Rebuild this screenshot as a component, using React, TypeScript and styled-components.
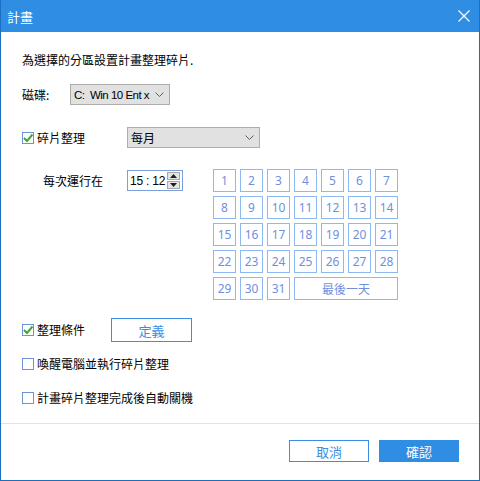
import styled, { createGlobalStyle } from "styled-components";

const GlobalStyle = createGlobalStyle`
  html, body {
    margin: 0;
    padding: 0;
    background: #ffffff;
  }
  body {
    font-family: "Noto Sans", "Noto Sans CJK TC", sans-serif;
    font-size: 12px;
    color: #000;
  }
  * {
    box-sizing: border-box;
  }
`;

const Window = styled.div`
  width: 480px;
  height: 481px;
  display: flex;
  flex-direction: column;
  border: 1px solid #1a6fc0;
  border-top: none;
  background: #fff;
`;

const TitleBar = styled.div`
  height: 32px;
  flex: none;
  background: #2f8de4;
  display: flex;
  align-items: center;
  justify-content: space-between;
  padding: 0 8px 0 6px;
  color: #fff;
  font-family: "Noto Sans CJK TC", sans-serif;
  font-size: 13px;
`;

const CloseButton = styled.div`
  width: 14px;
  height: 14px;
  display: flex;
  align-items: center;
  justify-content: center;
  margin-top: -1px;
`;

const Body = styled.div`
  flex: 1;
  padding-left: 21px;
  display: flex;
  flex-direction: column;
  font-family: "Noto Sans CJK TC", sans-serif;
`;

const Intro = styled.div`
  margin-top: 20px;
  line-height: 16px;
`;

const Row = styled.div<{ $top: number; $height?: number }>`
  display: flex;
  align-items: center;
  margin-top: ${(p) => p.$top}px;
  height: ${(p) => p.$height ?? 21}px;
`;

const Label = styled.div<{ $width?: number }>`
  width: ${(p) => (p.$width ? `${p.$width}px` : "auto")};
  flex: none;
  display: flex;
  align-items: center;
  line-height: 16px;
`;

const Box = styled.span`
  width: 12px;
  height: 12px;
  border: 1px solid #6f92d6;
  background: #fff;
  display: inline-flex;
  align-items: center;
  justify-content: center;
  margin-right: 3px;
  flex: none;
`;

const Select = styled.div<{ $width: number }>`
  width: ${(p) => p.$width}px;
  height: 21px;
  background: #e1e1e1;
  border: 1px solid #adadad;
  display: flex;
  align-items: center;
  justify-content: space-between;
  gap: 3px;
  padding: 0 5px 0 3px;
  overflow: hidden;
  white-space: nowrap;
`;

const SelectText = styled.span<{ $latin?: boolean }>`
  font-family: ${(p) =>
    p.$latin ? `"Liberation Sans", "Noto Sans CJK TC", sans-serif` : `"Noto Sans CJK TC", sans-serif`};
  font-size: ${(p) => (p.$latin ? "11.5px" : "12px")};
  min-width: 0;
  white-space: pre;
  letter-spacing: ${(p) => (p.$latin ? "-0.5px" : "0")};
`;

const Schedule = styled.div`
  display: flex;
  align-items: flex-start;
  margin-top: 21px;
  padding-left: 21px;
`;

const TimeLabel = styled.div`
  width: 84px;
  height: 21px;
  margin-top: 1px;
  display: flex;
  align-items: center;
`;

const TimeInput = styled.div`
  width: 56px;
  height: 21px;
  margin-top: 1px;
  border: 1px solid #7a9fdc;
  display: flex;
  align-items: center;
  justify-content: space-between;
  padding: 0 2px 0 2px;
  font-family: "Liberation Sans", sans-serif;
  font-size: 12px;
  white-space: pre;
  letter-spacing: -0.2px;
`;

const Spinner = styled.div`
  display: flex;
  flex-direction: column;
  width: 13px;
  flex: none;
`;

const SpinButton = styled.div`
  height: 8px;
  background: #e5e5e5;
  border: 1px solid #a7a7a7;
  display: flex;
  align-items: center;
  justify-content: center;
  & + & {
    margin-top: 1px;
  }
`;

const DayGrid = styled.div`
  margin-left: 30px;
  display: grid;
  grid-template-columns: repeat(7, 23px);
  grid-auto-rows: 23px;
  gap: 4px;
`;

const DayCell = styled.div<{ $span?: number }>`
  grid-column: span ${(p) => p.$span ?? 1};
  border: 1px solid #8cb9f1;
  color: #6f90dc;
  display: flex;
  align-items: center;
  justify-content: center;
  font-family: "Noto Sans", "Noto Sans CJK TC", sans-serif;
  font-size: 12px;
`;

const OutlineButton = styled.div<{ $width: number; $height: number }>`
  width: ${(p) => p.$width}px;
  height: ${(p) => p.$height}px;
  border: 1px solid #3b8ee5;
  color: #3b8ee5;
  display: flex;
  align-items: center;
  justify-content: center;
  font-family: "Noto Sans CJK TC", sans-serif;
  font-size: 13px;
`;

const PrimaryButton = styled(OutlineButton)`
  background: #2f8de4;
  border-color: #2f8de4;
  color: #fff;
`;

const Footer = styled.div`
  height: 57px;
  flex: none;
  border-top: 1px solid #e3e3e3;
  display: flex;
  justify-content: flex-end;
  align-items: flex-start;
  gap: 10px;
  padding: 16px 20px 0 0;
`;

const Chevron = () => (
  <svg width="9" height="5" viewBox="0 0 9 5" style={{ flex: "none" }}>
    <polyline points="0.5,0.5 4.5,4.5 8.5,0.5" fill="none" stroke="#606060" strokeWidth="1" />
  </svg>
);

const Check = () => (
  <svg width="10" height="10" viewBox="0 0 10 10">
    <polyline points="1,5 4,8 9.5,1.5" fill="none" stroke="#3cab2a" strokeWidth="2" />
  </svg>
);

const CheckBox = ({ checked, children }: { checked?: boolean; children: string }) => (
  <>
    <Box>{checked && <Check />}</Box>
    <span>{children}</span>
  </>
);

const days = Array.from({ length: 31 }, (_, i) => i + 1);

export default function App() {
  return (
    <>
      <GlobalStyle />
      <Window>
        <TitleBar>
          <span>計畫</span>
          <CloseButton>
            <svg width="12" height="12" viewBox="0 0 12 12">
              <path d="M0.5 0.5 L11.5 11.5 M11.5 0.5 L0.5 11.5" stroke="#fff" strokeWidth="1.2" />
            </svg>
          </CloseButton>
        </TitleBar>
        <Body>
          <Intro>為選擇的分區設置計畫整理碎片.</Intro>

          <Row $top={16}>
            <Label $width={48}>磁碟:</Label>
            <Select $width={100}>
              <SelectText $latin>{"C:  Win 10 Ent x"}</SelectText>
              <Chevron />
            </Select>
          </Row>

          <Row $top={22}>
            <Label $width={105}>
              <CheckBox checked>碎片整理</CheckBox>
            </Label>
            <Select $width={133}>
              <SelectText>每月</SelectText>
              <Chevron />
            </Select>
          </Row>

          <Schedule>
            <TimeLabel>每次運行在</TimeLabel>
            <TimeInput>
              <span>{"15 : 12"}</span>
              <Spinner>
                <SpinButton>
                  <svg width="7" height="4" viewBox="0 0 7 4">
                    <polygon points="3.5,0 7,4 0,4" fill="#202020" />
                  </svg>
                </SpinButton>
                <SpinButton>
                  <svg width="7" height="4" viewBox="0 0 7 4">
                    <polygon points="0,0 7,0 3.5,4" fill="#202020" />
                  </svg>
                </SpinButton>
              </Spinner>
            </TimeInput>
            <DayGrid>
              {days.map((d) => (
                <DayCell key={d}>{d}</DayCell>
              ))}
              <DayCell $span={4}>最後一天</DayCell>
            </DayGrid>
          </Schedule>

          <Row $top={18} $height={24}>
            <Label $width={89}>
              <CheckBox checked>整理條件</CheckBox>
            </Label>
            <OutlineButton $width={81} $height={24}>
              定義
            </OutlineButton>
          </Row>

          <Row $top={14} $height={16}>
            <Label>
              <CheckBox>喚醒電腦並執行碎片整理</CheckBox>
            </Label>
          </Row>

          <Row $top={18} $height={16}>
            <Label>
              <CheckBox>計畫碎片整理完成後自動關機</CheckBox>
            </Label>
          </Row>
        </Body>
        <Footer>
          <OutlineButton $width={80} $height={22}>
            取消
          </OutlineButton>
          <PrimaryButton $width={80} $height={22}>
            確認
          </PrimaryButton>
        </Footer>
      </Window>
    </>
  );
}
